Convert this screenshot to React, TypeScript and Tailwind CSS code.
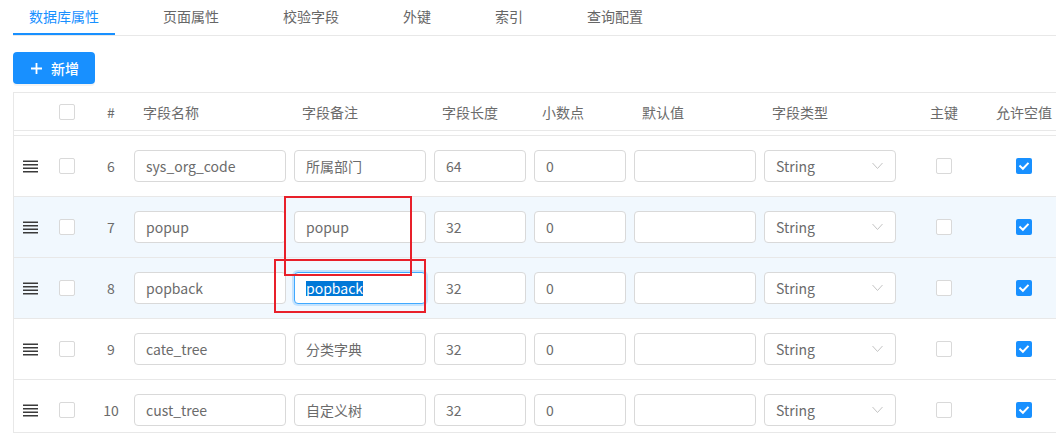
import React from 'react';

const rows = [
  { n: 6, name: 'sys_org_code', note: '所属部门', len: '64', hl: false },
  { n: 7, name: 'popup', note: 'popup', len: '32', hl: true },
  { n: 8, name: 'popback', note: 'popback', len: '32', hl: true, focus: true },
  { n: 9, name: 'cate_tree', note: '分类字典', len: '32', hl: false },
  { n: 10, name: 'cust_tree', note: '自定义树', len: '32', hl: false },
];

const tabs = ['数据库属性', '页面属性', '校验字段', '外键', '索引', '查询配置'];

function Checkbox({ checked = false }: { checked?: boolean }) {
  if (checked) {
    return (
      <div className="w-4 h-4 rounded-[2px] bg-[#1890ff] flex items-center justify-center">
        <svg width="16" height="16" viewBox="0 0 16 16">
          <path d="M4.2 8.2 L6.9 10.8 L11.8 5.6" stroke="#fff" strokeWidth="2" fill="none" strokeLinecap="square" />
        </svg>
      </div>
    );
  }
  return <div className="w-4 h-4 rounded-[2px] border border-[#d9d9d9] bg-white" />;
}

function DragIcon() {
  return (
    <svg width="15" height="13" viewBox="0 0 15 13">
      <rect x="0" y="0.5" width="15" height="1.5" fill="#3a3a3a" />
      <rect x="0" y="4" width="15" height="1.5" fill="#3a3a3a" />
      <rect x="0" y="7.5" width="15" height="1.5" fill="#3a3a3a" />
      <rect x="0" y="11" width="15" height="1.5" fill="#3a3a3a" />
    </svg>
  );
}

function Input({ value, focus = false }: { value: string; focus?: boolean }) {
  return (
    <div
      className={
        'h-8 w-full rounded-[4px] border bg-white px-[11px] flex items-center text-sm text-[#6b6b6b] ' +
        (focus ? 'border-[#40a9ff] shadow-[0_0_0_2px_rgba(24,144,255,0.2)]' : 'border-[#d9d9d9]')
      }
    >
      {focus ? <span className="bg-[#0078d7] text-white leading-[15px]">{value}</span> : <span>{value}</span>}
    </div>
  );
}

function Select() {
  return (
    <div className="h-8 w-full rounded-[4px] border border-[#d9d9d9] bg-white pl-[11px] pr-[12px] flex items-center justify-between text-sm text-[#6b6b6b]">
      <span>String</span>
      <svg width="11" height="8" viewBox="0 0 11 8">
        <path d="M0.5 1 L5.5 6.5 L10.5 1" stroke="#c4c4c4" strokeWidth="1" fill="none" />
      </svg>
    </div>
  );
}

export default function App() {
  return (
    <div className="w-[1056px] h-[439px] overflow-hidden bg-white pl-[13px] font-['Noto_Sans_CJK_SC','Noto_Sans',sans-serif] relative">
      {/* tabs */}
      <div className="flex border-b border-[#e8e8e8] h-[36px]">
        {tabs.map((t, i) => (
          <div
            key={t}
            className={
              'h-[35px] px-4 pt-[5px] text-sm leading-[22px] mr-8 ' +
              (i === 0 ? 'text-[#1890ff] border-b-2 border-[#1890ff]' : 'text-[#666]')
            }
          >
            {t}
          </div>
        ))}
      </div>

      {/* button */}
      <div className="mt-4">
        <div className="inline-flex items-center h-8 w-[82px] rounded-[4px] bg-[#1890ff] pl-[18px] text-white text-sm font-medium shadow-[0_2px_0_rgba(0,0,0,0.045)]">
          <svg width="11" height="11" viewBox="0 0 11 11">
            <path d="M5.5 0 V11 M0 5.5 H11" stroke="#fff" strokeWidth="1.8" />
          </svg>
          <span className="ml-[9px]">新增</span>
        </div>
      </div>

      {/* table */}
      <div className="mt-2 border-l border-t border-[#e8e8e8] text-sm text-[#6b6b6b]">
        {/* header */}
        <div className="flex h-[38px] items-center border-b border-[#e8e8e8]">
          <div className="w-[32px]" />
          <div className="w-[42px] flex justify-center">
            <Checkbox />
          </div>
          <div className="w-[38px] pl-2 text-center">#</div>
          <div className="w-[160px] pl-[17px]">字段名称</div>
          <div className="w-[140px] pl-4">字段备注</div>
          <div className="w-[100px] pl-4">字段长度</div>
          <div className="w-[100px] pl-4">小数点</div>
          <div className="w-[130px] pl-4">默认值</div>
          <div className="w-[140px] pl-4">字段类型</div>
          <div className="w-[96px] text-center">主键</div>
          <div className="w-[64px] text-center whitespace-nowrap">允许空值</div>
        </div>

        {/* body */}
        <div className="h-[302px] overflow-hidden border-b border-[#e8e8e8]">
          <div className="h-[5px] border-b border-[#e8e8e8]" />
          {rows.map((r) => (
            <div
              key={r.n}
              className={
                'flex h-[61px] items-center border-b border-[#e8e8e8] ' + (r.hl ? 'bg-[#f1f8fe]' : 'bg-white')
              }
            >
              <div className="w-[32px] flex justify-center pl-[1px]">
                <DragIcon />
              </div>
              <div className="w-[42px] flex justify-center">
                <Checkbox />
              </div>
              <div className="w-[38px] pl-2 text-center">{r.n}</div>
              <div className="w-[160px] pl-2">
                <Input value={r.name} />
              </div>
              <div className="w-[140px] pl-2">
                <Input value={r.note} focus={!!r.focus} />
              </div>
              <div className="w-[100px] pl-2">
                <Input value={r.len} />
              </div>
              <div className="w-[100px] pl-2">
                <Input value="0" />
              </div>
              <div className="w-[130px] pl-2">
                <Input value="" />
              </div>
              <div className="w-[140px] pl-2">
                <Select />
              </div>
              <div className="w-[96px] flex justify-center">
                <Checkbox />
              </div>
              <div className="w-[64px] flex justify-center">
                <Checkbox checked />
              </div>
            </div>
          ))}
        </div>
      </div>

      {/* annotation boxes */}
      <div className="absolute left-[284px] top-[196px] w-[128px] h-[80px] border-2 border-[#e8202a]" />
      <div className="absolute left-[274px] top-[259px] w-[152px] h-[54px] border-2 border-[#e8202a]" />
    </div>
  );
}
